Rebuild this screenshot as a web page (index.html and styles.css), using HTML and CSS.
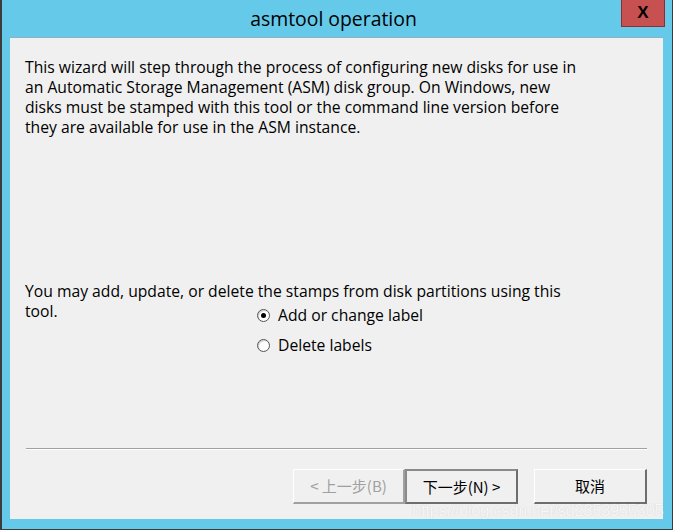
FILE: index.html
```html
<!DOCTYPE html>
<html>
<head>
<meta charset="utf-8">
<link rel="stylesheet" href="styles.css">
</head>
<body>
<div class="window">
  <div class="titlebar">
    <div class="title">asmtool operation</div>
    <div class="close">X</div>
  </div>
  <div class="client">
    <p class="intro">This wizard will step through the process of configuring new disks for use in an Automatic Storage Management (ASM) disk group. On Windows, new disks must be stamped with this tool or the command line version before they are available for use in the ASM instance.</p>
    <p class="note">You may add, update, or delete the stamps from disk partitions using this tool.</p>
    <div class="options">
      <label class="opt"><span class="radio checked"></span>Add or change label</label>
      <label class="opt"><span class="radio"></span>Delete labels</label>
    </div>
    <div class="sep"></div>
    <div class="buttons">
      <div class="btn disabled">&lt; 上一步(B)</div>
      <div class="btn default">下一步(N) &gt;</div>
      <div class="btn cancel">取消</div>
    </div>
  </div>
  <div class="watermark">https://blog.csdn.net/sd2353955305</div>
</div>
</body>
</html>
```

FILE: styles.css
```css
html, body {
  margin: 0;
  padding: 0;
}
body {
  width: 673px;
  height: 530px;
  overflow: hidden;
  background: #2a2a2a;
  font-family: "Open Sans", "Noto Sans CJK SC", sans-serif;
}
.window {
  position: relative;
  box-sizing: border-box;
  width: 673px;
  height: 530px;
  background: #65c9ea;
  border-left: 2px solid #3c3c3c;
  border-right: 1px solid #3c3c3c;
  border-bottom: 1px solid #3c3c3c;
  padding: 0 9px 10px 8px;
  display: flex;
  flex-direction: column;
}
.titlebar {
  height: 37px;
  position: relative;
  display: flex;
  justify-content: center;
}
.title {
  font-family: "Open Sans", "Noto Sans CJK SC", sans-serif;
  font-size: 19.4px;
  color: #000;
  line-height: 37px;
  margin-left: -6px;
}
.close {
  position: absolute;
  top: 0;
  right: -2px;
  width: 42px;
  height: 26px;
  background: #c75050;
  border: 1px solid #8a3030;
  border-top: none;
  color: #000;
  font-family: "Liberation Sans", sans-serif;
  font-weight: bold;
  font-size: 17px;
  line-height: 26px;
  text-align: center;
}
.client {
  flex: 1;
  background: #f0f0f0;
  border-top: 1px solid #8fb0c8;
  display: flex;
  flex-direction: column;
  font-size: 15.7px;
  line-height: 20px;
  color: #000;
}
.intro {
  margin: 19px 0 0 15px;
  width: 562px;
}
.note {
  margin: 144px 0 0 15px;
  width: 562px;
}
.options {
  margin: -16px 0 0 247px;
  display: flex;
  flex-direction: column;
  gap: 10px;
}
.opt {
  display: flex;
  align-items: center;
  gap: 8px;
  height: 20px;
}
.radio {
  box-sizing: border-box;
  width: 13px;
  height: 13px;
  border-radius: 50%;
  border: 1px solid #555;
  background: #fff;
  position: relative;
  box-shadow: inset 1px 1px 1px #ccc;
}
.radio.checked::after {
  content: "";
  position: absolute;
  left: 3px;
  top: 3px;
  width: 5px;
  height: 5px;
  border-radius: 50%;
  background: #000;
}
.sep {
  margin: 93px 16px 0 16px;
  height: 1px;
  background: #a0a0a0;
  border-bottom: 1px solid #fff;
}
.buttons {
  margin: 19px 0 0 283px;
  display: flex;
}
.btn {
  box-sizing: border-box;
  width: 112px;
  height: 35px;
  background: #f0f0f0;
  border-top: 1px solid #fff;
  border-left: 1px solid #fff;
  border-right: 2px solid #6d6d6d;
  border-bottom: 2px solid #6d6d6d;
  font-family: "Noto Sans CJK SC", sans-serif;
  font-size: 15px;
  line-height: 31px;
  text-align: center;
  color: #000;
}
.btn.disabled {
  color: #a0a0a0;
  border-right-color: #a0a0a0;
  border-bottom-color: #a0a0a0;
}
.btn.default {
  width: 113px;
  border: 2px solid #6d6d6d;
  border-top-color: #8a8a8a;
  border-left-color: #8a8a8a;
}
.btn.cancel {
  margin-left: 16px;
  width: 113px;
}
.watermark {
  position: absolute;
  left: 410px;
  top: 501px;
  font-family: "Liberation Sans", sans-serif;
  font-size: 16.5px;
  color: rgba(255, 255, 255, 0.85);
  text-shadow: 0 0 1px rgba(180, 180, 180, 0.7);
  white-space: nowrap;
  letter-spacing: -0.3px;
}
```
